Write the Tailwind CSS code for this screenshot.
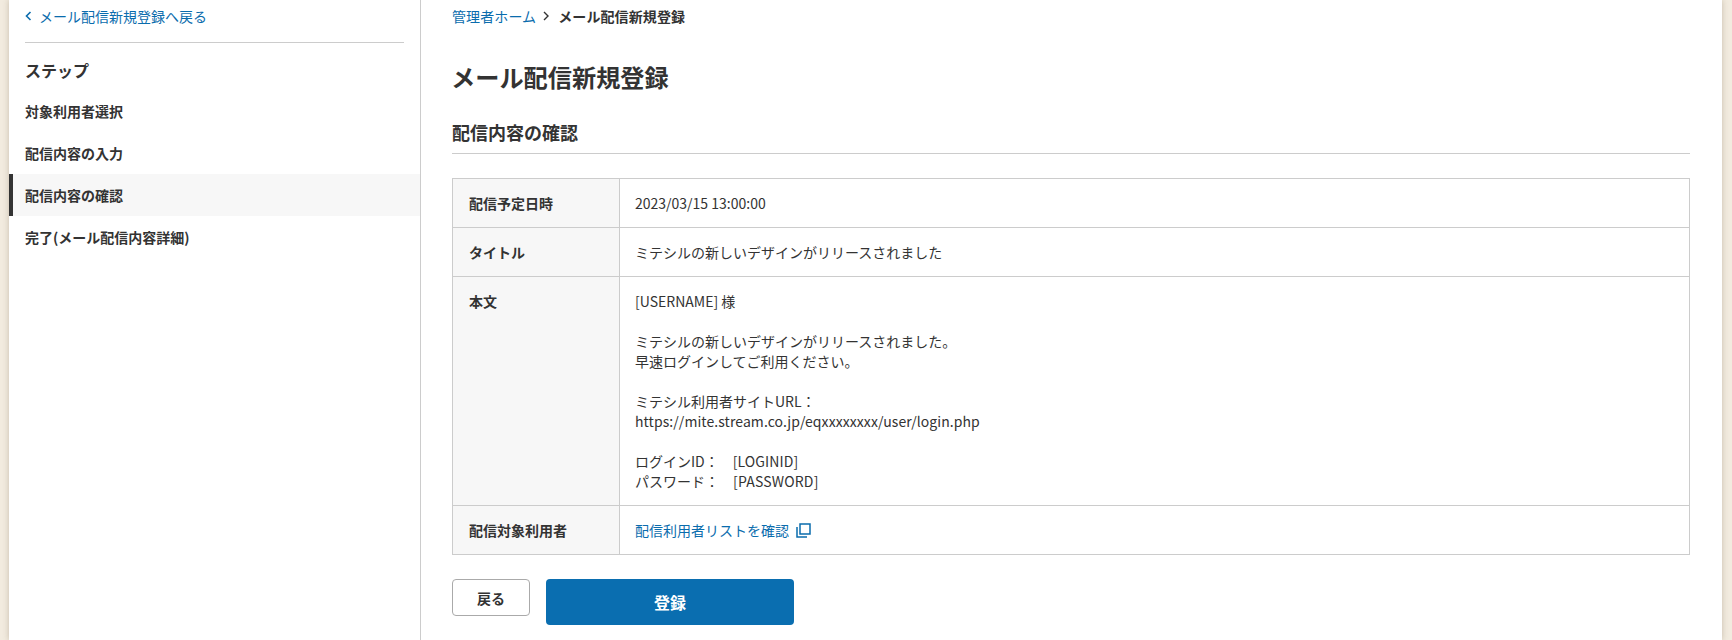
<!DOCTYPE html>
<html lang="ja">
<head>
  <meta charset="UTF-8">
  <title>メール配信新規登録</title>
  <script src="https://cdn.jsdelivr.net/npm/@tailwindcss/browser@4"></script>
</head>
<body class="bg-[#f2ebdf] text-[#333333] text-[14px] leading-[20px] font-['Noto_Sans_CJK_JP',sans-serif] overflow-hidden">
  <div class="ml-[9px] h-[640px] w-[1713px] bg-white flex overflow-hidden shadow-[0_0_6px_rgba(100,80,50,0.3)]">

    <!-- sidebar -->
    <aside class="w-[412px] h-full shrink-0 border-r border-[#cccccc]">
      <div class="mx-[16px] h-[43px] border-b border-[#cccccc] flex items-start pt-[6px]">
        <a class="flex items-center text-[#0a6cad]">
          <svg class="w-[7px] h-[10px] mr-[7px]" viewBox="0 0 7 10" fill="none" stroke="#0a6cad" stroke-width="1.6"><path d="M5.5 1 1.5 5l4 4"/></svg>
          <span>メール配信新規登録へ戻る</span>
        </a>
      </div>
      <h2 class="mx-[16px] mt-[15px] text-[16px] leading-[24px] font-bold">ステップ</h2>
      <ul class="mt-[8px] font-bold">
        <li class="h-[42px] pl-[16px] flex items-center">対象利用者選択</li>
        <li class="h-[42px] pl-[16px] flex items-center">配信内容の入力</li>
        <li class="h-[42px] pl-[12px] flex items-center bg-[#f7f7f7] border-l-[4px] border-[#333333]">配信内容の確認</li>
        <li class="h-[42px] pl-[16px] flex items-center">完了(メール配信内容詳細)</li>
      </ul>
    </aside>

    <!-- main -->
    <main class="flex-1 pl-[31px] pr-[32px]">
      <nav class="flex items-center pt-[5px] h-[27px]">
        <a class="text-[#0a6cad] tracking-[0.1px]">管理者ホーム</a>
        <svg class="w-[8px] h-[10px] ml-[6px] mr-[8px]" viewBox="0 0 8 10" fill="none" stroke="#333333" stroke-width="1.4"><path d="M2 1l4 4-4 4"/></svg>
        <span class="font-bold tracking-[0.1px]">メール配信新規登録</span>
      </nav>
      <h1 class="mt-[32px] -ml-[1px] text-[24.2px] leading-[36px] font-bold">メール配信新規登録</h1>
      <h2 class="mt-[23px] h-[36px] text-[18px] leading-[28px] font-bold border-b border-[#cccccc]">配信内容の確認</h2>

      <table class="mt-[24px] w-full border-collapse">
        <tbody>
          <tr>
            <th class="w-[167px] h-[49px] border border-[#cccccc] bg-[#f7f7f7] px-[16px] text-left align-middle font-bold">配信予定日時</th>
            <td class="h-[49px] border border-[#cccccc] px-[15px] align-middle">2023/03/15 13:00:00</td>
          </tr>
          <tr>
            <th class="h-[49px] border border-[#cccccc] bg-[#f7f7f7] px-[16px] text-left align-middle font-bold">タイトル</th>
            <td class="h-[49px] border border-[#cccccc] px-[15px] align-middle">ミテシルの新しいデザインがリリースされました</td>
          </tr>
          <tr>
            <th class="border border-[#cccccc] bg-[#f7f7f7] px-[16px] py-[14px] text-left align-top font-bold">本文</th>
            <td class="border border-[#cccccc] px-[15px] py-[14px] align-top">
              [USERNAME] 様<br><br>
              ミテシルの新しいデザインがリリースされました。<br>
              早速ログインしてご利用ください。<br><br>
              ミテシル利用者サイトURL：<br>
              <span class="tracking-[0.07px]">https://mite.stream.co.jp/eqxxxxxxxx/user/login.php</span><br><br>
              ログインID：　<span class="tracking-[0.1px]">[LOGINID]</span><br>
              パスワード：　<span class="tracking-[0.2px]">[PASSWORD]</span>
            </td>
          </tr>
          <tr>
            <th class="h-[49px] border border-[#cccccc] bg-[#f7f7f7] px-[16px] text-left align-middle font-bold">配信対象利用者</th>
            <td class="h-[49px] border border-[#cccccc] px-[15px] align-middle">
              <a class="inline-flex items-center text-[#0a6cad]">配信利用者リストを確認
                <svg class="w-[15px] h-[15px] ml-[7px]" viewBox="0 0 15 15" fill="none" stroke="#0a6cad" stroke-width="1.5"><path d="M4 1h10v10H4zM1 4v10h10"/></svg>
              </a>
            </td>
          </tr>
        </tbody>
      </table>

      <div class="mt-[24px] flex items-start gap-[16px]">
        <button class="w-[78px] h-[37px] rounded-[4px] border border-[#aaaaaa] bg-white font-bold">戻る</button>
        <button class="w-[248px] h-[46px] rounded-[4px] bg-[#0a6eb0] text-white text-[16px] font-bold">登録</button>
      </div>
    </main>
  </div>
</body>
</html>
